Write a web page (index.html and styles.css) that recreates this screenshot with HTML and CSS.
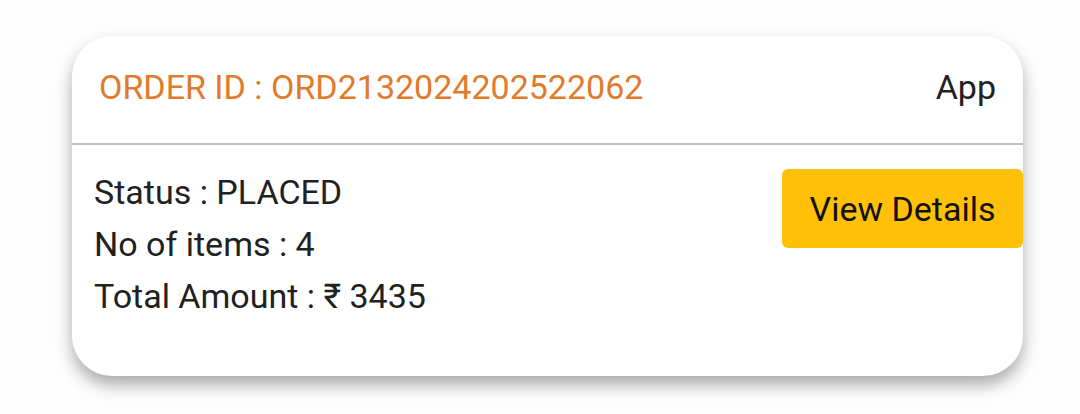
FILE: index.html
```html
<!DOCTYPE html>
<html lang="en">
<head>
    <meta charset="UTF-8">
    <meta name="viewport" content="width=device-width, initial-scale=1.0">
    <title>Order</title>
    <link rel="stylesheet" href="styles.css">
</head>
<body>
    <div class="order-card">
        <div class="order-header">
            <span class="order-id">ORDER ID : ORD2132024202522062</span>
            <span class="order-source">App</span>
        </div>
        <div class="order-body">
            <div class="order-info">
                <div>Status : PLACED</div>
                <div>No of items : 4</div>
                <div>Total Amount : ₹ 3435</div>
            </div>
            <button class="details-button">View Details</button>
        </div>
    </div>
</body>
</html>
```

FILE: styles.css
```css
html {
    height: 100%;
}
body {
    font-family: Roboto, 'Noto Sans', sans-serif;
    margin: 0;
    padding: 36px 56px 0 72px;
    min-height: 100%;
    box-sizing: border-box;
    background-color: #fdfdfd;
}
.order-card {
    background-color: #fff;
    width: 951px;
    height: 340px;
    border-radius: 40px;
    box-shadow: 0 9px 16px rgba(0, 0, 0, 0.32);
    overflow: hidden;
    box-sizing: border-box;
}
.order-header {
    display: flex;
    justify-content: space-between;
    align-items: center;
    height: 109px;
    padding: 0 27px 6px 27px;
    box-sizing: border-box;
    border-bottom: 2px solid #bdbdbd;
    font-size: 34px;
}
.order-id {
    color: #e27a2c;
}
.order-source {
    color: #212121;
}
.order-body {
    display: flex;
    justify-content: space-between;
    align-items: flex-start;
    padding: 21px 0 0 22px;
}
.order-info {
    color: #212121;
    font-size: 34px;
    line-height: 52px;
}
.details-button {
    margin-top: 3px;
    width: 241px;
    height: 79px;
    background-color: #ffc107;
    color: #111;
    border: none;
    border-radius: 6px;
    font-family: Roboto, sans-serif;
    font-size: 34px;
    padding: 0;
    cursor: pointer;
}
```
